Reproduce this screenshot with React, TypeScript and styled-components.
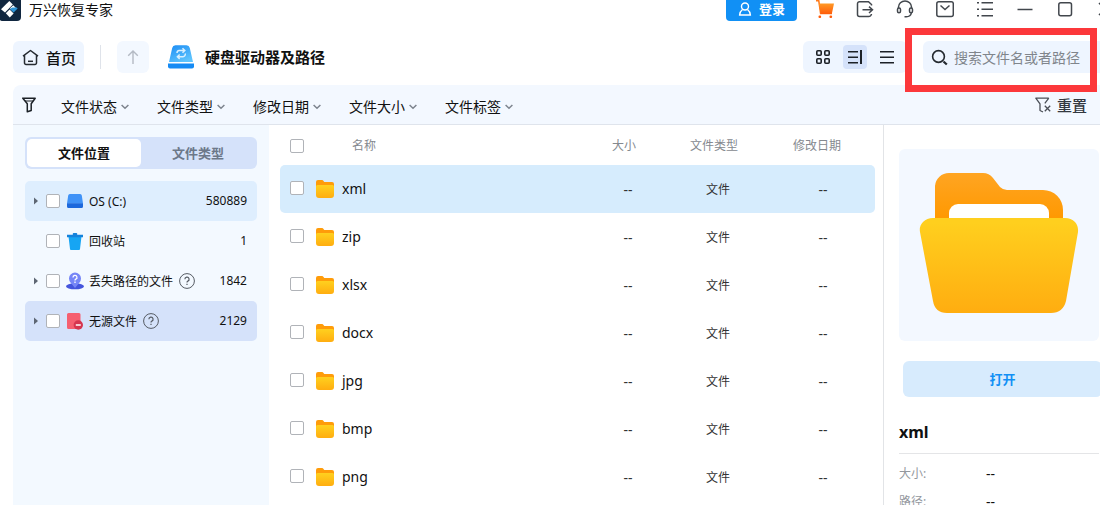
import React, { useState } from "react";
import styled, { createGlobalStyle } from "styled-components";

const GlobalStyle = createGlobalStyle`
  *, *::before, *::after { box-sizing: border-box; }
  html, body { margin: 0; padding: 0; background: #fff; overflow: hidden; }
  body, button, input {
    font-family: "Noto Sans", "Noto Sans CJK SC", sans-serif;
    color: #111;
  }
  button { border: 0; background: none; padding: 0; cursor: pointer; white-space: nowrap; }
  svg { display: block; flex: none; }
`;

const Page = styled.div`
  display: flex;
  flex-direction: column;
  height: 100vh;
  overflow: hidden;
  background: #fff;
`;

/* Title bar */

const TitleBar = styled.header`
  display: flex;
  align-items: flex-start;
  height: 21px;
`;

const AppName = styled.span`
  margin-left: 8px;
  font-size: 14px;
  line-height: 20px;
`;

const LoginButton = styled.button`
  display: flex;
  align-items: center;
  justify-content: center;
  gap: 7px;
  width: 71px;
  height: 21px;
  padding-bottom: 3px;
  margin-left: auto;
  border-radius: 0 0 4px 4px;
  background: #1190f5;
  color: #fff;
  font-size: 13px;
  font-weight: 700;
  line-height: 18px;
`;

const WindowActions = styled.nav`
  display: flex;
  margin-left: 8px;
  margin-right: -25px;
`;

const WindowButton = styled.button`
  display: flex;
  align-items: center;
  justify-content: center;
  width: 40px;
  height: 18px;
`;

/* Toolbar */

const Toolbar = styled.div`
  display: flex;
  align-items: center;
  flex: none;
  height: 32px;
  margin: 20px 0 12px;
  padding-left: 13px;
`;

const HomeButton = styled.button`
  display: flex;
  align-items: center;
  gap: 7px;
  height: 32px;
  padding: 0 8px 0 9px;
  border-radius: 6px;
  background: #eef5ff;
  font-size: 15px;
  font-weight: 500;
`;

const Divider = styled.span`
  width: 1px;
  height: 24px;
  margin: 0 16px;
  background: #dfe3ea;
`;

const UpButton = styled.button`
  display: flex;
  align-items: center;
  justify-content: center;
  width: 32px;
  height: 32px;
  border-radius: 6px;
  background: #f3f8ff;
`;

const Location = styled.h1`
  display: flex;
  align-items: center;
  gap: 11px;
  margin: 0 0 0 19px;
  font-size: 15px;
  font-weight: 700;
  line-height: 24px;
`;

const ViewSwitch = styled.div`
  display: flex;
  align-items: center;
  height: 32px;
  margin-left: auto;
  padding: 0 4px;
  border-radius: 6px;
  background: #eef5ff;
`;

const ViewButton = styled.button<{ $active?: boolean }>`
  display: flex;
  align-items: center;
  justify-content: center;
  width: 24px;
  height: 24px;
  margin: 0 4px;
  border-radius: 4px;
  background: ${(p) => (p.$active ? "#d5e2fa" : "transparent")};
`;

const SearchArea = styled.div`
  position: relative;
  width: 177px;
  margin-left: 16px;
`;

const SearchLabel = styled.label`
  display: flex;
  align-items: center;
  gap: 6px;
  height: 32px;
  padding-left: 8px;
  border-radius: 6px 0 0 6px;
  background: #eef5ff;
`;

const SearchInput = styled.input`
  flex: 1;
  min-width: 0;
  height: 32px;
  padding: 0;
  border: 0;
  outline: 0;
  background: transparent;
  font-size: 14px;
  &::placeholder { color: #80858c; opacity: 1; }
`;

const Highlight = styled.span`
  position: absolute;
  inset: -13px 3px -19px -18px;
  border: 7px solid #fc383b;
  pointer-events: none;
`;

/* Filter bar */

const FilterBar = styled.div`
  display: flex;
  align-items: center;
  flex: none;
  gap: 28px;
  height: 40px;
  margin-left: 13px;
  padding: 4px 13px 0 9px;
  border-bottom: 1px solid #dfe4ec;
  border-radius: 8px 0 0 0;
  background: #f3f8ff;
`;

const FunnelWrap = styled.span`
  display: flex;
  width: 11px;
  padding-bottom: 4px;
`;

const FilterButton = styled.button`
  display: flex;
  align-items: center;
  gap: 4px;
  font-size: 14px;
  line-height: 20px;
`;

const ResetButton = styled.button`
  display: flex;
  align-items: center;
  gap: 6px;
  margin-left: auto;
  padding-bottom: 4px;
  color: #333840;
  font-size: 15px;
  font-weight: 500;
  line-height: 20px;
`;

/* Columns */

const Columns = styled.main`
  display: grid;
  grid-template-columns: 256px minmax(0, 1fr) 217px;
  flex: 1;
  min-height: 0;
  padding-left: 13px;
`;

const Sidebar = styled.aside`
  padding: 12px;
  background: #f3f9ff;
`;

const Tabs = styled.div`
  display: flex;
  height: 32px;
  margin-bottom: 12px;
  padding: 2px;
  border-radius: 6px;
  background: #d5e2fa;
`;

const Tab = styled.button<{ $active?: boolean }>`
  flex: 1;
  border-radius: 5px;
  background: ${(p) => (p.$active ? "#fff" : "transparent")};
  color: ${(p) => (p.$active ? "#111" : "#6c7889")};
  font-size: 13px;
  font-weight: 700;
  line-height: 20px;
`;

const Tree = styled.ul`
  margin: 0;
  padding: 0;
  list-style: none;
`;

const TreeItem = styled.li<{ $tone?: string }>`
  display: flex;
  align-items: center;
  height: 40px;
  padding: 0 10px 0 9px;
  border-radius: 5px;
  background: ${(p) => p.$tone ?? "transparent"};
  font-size: 12px;
  line-height: 18px;
`;

const Expander = styled.span`
  width: 12px;
`;

const TreeLabel = styled.label`
  display: flex;
  align-items: center;
  white-space: nowrap;
`;

const TreeIcon = styled.span`
  display: flex;
  justify-content: center;
  width: 18px;
  margin: 0 5px 0 6px;
`;

const TreeName = styled.span`
  padding-top: 2px;
`;

const HelpButton = styled.button`
  margin-left: 6px;
`;

const Count = styled.span`
  margin-left: auto;
`;

const Checkbox = styled.input.attrs({ type: "checkbox" })`
  appearance: none;
  flex: none;
  display: block;
  width: 14px;
  height: 14px;
  margin: 0;
  border: 1px solid #b0b3b8;
  border-radius: 2px;
  background: #fff;
  &:checked { background: #1190f5; border-color: #1190f5; }
`;

/* File list */

const ListPane = styled.section`
  padding: 0 8px 0 11px;
  overflow: hidden;
`;

const FileTable = styled.table`
  width: 100%;
  table-layout: fixed;
  border-collapse: separate;
  border-spacing: 0;
  font-size: 12px;
  line-height: 18px;
`;

const HeadCell = styled.th<{ $width?: number; $name?: boolean }>`
  width: ${(p) => (p.$width ? `${p.$width}px` : "auto")};
  height: 40px;
  padding: ${(p) => (p.$name ? "2px 0 0 36px" : "2px 0 0")};
  color: #85898f;
  font-weight: 400;
  text-align: ${(p) => (p.$name ? "left" : "center")};
`;

const HeadCheckCell = styled.th`
  width: 36px;
  padding: 2px 0 0 10px;
`;

const CheckCell = styled.td`
  height: 48px;
  padding: 0 0 2px 10px;
`;

const NameCell = styled.td`
  padding: 0;
  font-size: 14px;
`;

const NameContent = styled.span`
  display: flex;
  align-items: center;
  gap: 8px;
`;

const InfoCell = styled.td`
  padding: 2px 0 0 8px;
  color: #333;
  text-align: center;
  &:last-child { padding-left: 12px; }
`;

const FileRow = styled.tr<{ $selected?: boolean }>`
  > td { background: ${(p) => (p.$selected ? "#d6ecfd" : "transparent")}; }
  > td:first-child { border-radius: 5px 0 0 5px; }
  > td:last-child { border-radius: 0 5px 5px 0; }
`;

const Dashes = styled.span`
  font-size: 14px;
`;

/* Details */

const Details = styled.aside`
  padding: 24px 0 0 15px;
  border-left: 1px solid #e2e4e7;
  overflow: hidden;
`;

const Preview = styled.div`
  display: flex;
  align-items: center;
  justify-content: center;
  height: 192px;
  margin-right: 1px;
  padding-bottom: 4px;
  border-radius: 6px;
  background: #f3f8ff;
`;

const OpenButton = styled.button`
  display: block;
  width: calc(100% - 2px);
  height: 36px;
  margin: 20px 0 0 4px;
  padding-bottom: 2px;
  border-radius: 6px;
  background: #d7ebfd;
  color: #1190f5;
  font-size: 13px;
  font-weight: 700;
`;

const DetailName = styled.h2`
  margin: 23px 1px 0 0;
  padding-bottom: 9px;
  border-bottom: 1px solid #e4e5e7;
  font-size: 16px;
  font-weight: 700;
  line-height: 24px;
`;

const Facts = styled.dl`
  display: grid;
  grid-template-columns: 87px 1fr;
  row-gap: 8px;
  margin: 10px 0 0;
  line-height: 20px;
  dt { color: #94989e; font-size: 12px; }
  dd { margin: 0; font-size: 14px; }
`;

/* Drawings */

const Logo = () => (
  <svg width="21" height="21" viewBox="0 0 21 21" aria-hidden="true">
    <path d="M0 0H21V17a4 4 0 0 1-4 4H2a3 3 0 0 1-2-1Z" fill="#10263f" />
    <path d="M1 9.200 9.300 1 12.800 4.400 5 12.600Z" fill="#fff" />
    <path d="M5.800 13.200 9.600 9.400 13.600 13.400 9.800 17.400Z" fill="#fff" />
    <path d="M9.800 8.600 13.200 5.200 16.300 8.200 11.500 9.600Z" fill="#fff" />
    <path d="M9.800 8.900 12.500 7.600 16.800 7.600 17.600 8.600 13.600 12.600Z" fill="#2e94d6" />
  </svg>
);

const UserIcon = () => (
  <svg width="14" height="14" viewBox="0 0 14 14" fill="none" stroke="#fff" strokeWidth="1.4">
    <circle cx="7" cy="4.500" r="3.500" />
    <path d="M4.500 7.500C2.600 9 1.600 10.800 1.600 13H12.400C12.400 10.800 11.400 9 9.500 7.500" />
  </svg>
);

const CartIcon = () => (
  <svg width="18" height="18" viewBox="0 0 18 18">
    <defs>
      <linearGradient id="cart" x1="0" y1="0" x2="0" y2="1">
        <stop offset="0" stopColor="#ff9a26" />
        <stop offset="1" stopColor="#ff5c0a" />
      </linearGradient>
    </defs>
    <path d="M0 .8H2.800L4.600 13.500H16" fill="none" stroke="#ff7a1a" strokeWidth="1.500" />
    <path d="M2.800 3.500H18L15.800 14H4.600Z" fill="url(#cart)" />
    <rect x="2.500" y="15.500" width="2.600" height="2.500" rx="1" fill="#ff5c0a" />
    <rect x="13.500" y="15.500" width="2.600" height="2.500" rx="1" fill="#ff5c0a" />
  </svg>
);

const outline = { fill: "none", stroke: "#42474d", strokeWidth: 1.5 } as const;

const ExportIcon = () => (
  <svg width="18" height="18" viewBox="0 0 18 18" {...outline}>
    <path d="M15.500 5.500V4.500L12.500 1.700H3.500a2 2 0 0 0-2 2V14.500a2 2 0 0 0 2 2H12.500a3 3 0 0 0 3-2.500" />
    <path d="M6.500 9.800H16.500M13 6.600 16.500 9.800 13 13" />
  </svg>
);

const HeadsetIcon = () => (
  <svg width="18" height="18" viewBox="0 0 18 18" {...outline}>
    <path d="M2.500 8V7a6.500 6 0 0 1 13 0v1" />
    <rect x="1.500" y="8" width="3" height="4.800" rx="1.500" />
    <rect x="13.500" y="8" width="3" height="4.800" rx="1.500" />
    <path d="M15.300 13c-.4 2.500-2 3.700-5 3.800H8.500" />
  </svg>
);

const MailIcon = () => (
  <svg width="18" height="18" viewBox="0 0 18 18" {...outline}>
    <rect x=".8" y="1.800" width="16.500" height="14.700" rx="2" />
    <path d="M4.500 5.500 9 9.500 13.500 5.500" />
  </svg>
);

const MenuIcon = () => (
  <svg width="16" height="16" viewBox="0 0 16 16" {...outline}>
    <path d="M0 1.800H2M4.500 1.800H16M0 8.300H2M4.500 8.300H16M0 14.800H2M4.500 14.800H16" />
  </svg>
);

const MinimizeIcon = () => (
  <svg width="16" height="16" viewBox="0 0 16 16" {...outline}>
    <path d="M0.500 8.500H15.500" />
  </svg>
);

const MaximizeIcon = () => (
  <svg width="16" height="16" viewBox="0 0 16 16" {...outline}>
    <rect x="1.800" y="1.800" width="12.700" height="13" rx="2" />
  </svg>
);

const CloseIcon = () => (
  <svg width="16" height="16" viewBox="0 0 16 16" {...outline}>
    <path d="M2 2 14 14M14 2 2 14" />
  </svg>
);

const HomeIcon = () => (
  <svg width="17" height="17" viewBox="0 0 17 17" fill="none" stroke="#262b31" strokeWidth="1.500" strokeLinejoin="round">
    <path d="M1 7.200 8.500 1.500 16 7.200M2.500 6.500V14A1.500 1.500 0 0 0 4 15.500H13A1.500 1.500 0 0 0 14.500 14V6.500" />
    <path d="M6 12.300H11" />
  </svg>
);

const UpIcon = () => (
  <svg width="12" height="14" viewBox="0 0 12 14" fill="none" stroke="#b4bac4" strokeWidth="1.400">
    <path d="M6 14V1M1.200 5.800 6 1 10.800 5.800" />
  </svg>
);

const DriveIcon = () => (
  <svg width="26" height="26" viewBox="0 0 26 26">
    <defs>
      <linearGradient id="drive" x1="0" y1="0" x2="0.600" y2="1">
        <stop offset="0" stopColor="#1a8cf5" />
        <stop offset="1" stopColor="#5fc4fd" />
      </linearGradient>
    </defs>
    <path d="M4.200 4A3.500 3.500 0 0 1 7.500 1.200H18.500A3.500 3.500 0 0 1 21.800 4L25 18H1Z" fill="url(#drive)" />
    <path d="M0 19.500H26V22.500a2 2 0 0 1-2 2H2a2 2 0 0 1-2-2Z" fill="#168bf4" />
    <path d="M9 9A2.500 2.500 0 0 1 11.200 6.500H16.500M14.500 4.300 16.800 6.500 14.500 8.700M17.200 9.500A2.500 2.500 0 0 1 15 12.700H10M11.700 10.500 9.400 12.700 11.700 14.900" fill="none" stroke="#d8effe" strokeWidth="1.500" />
  </svg>
);

const GridIcon = () => (
  <svg width="16" height="16" viewBox="0 0 16 16" fill="none" stroke="#1c2127" strokeWidth="1.600">
    <rect x="1.800" y="1.800" width="4.400" height="4.400" rx="1" />
    <rect x="9.800" y="1.800" width="4.400" height="4.400" rx="1" />
    <rect x="1.800" y="9.800" width="4.400" height="4.400" rx="1" />
    <rect x="9.800" y="9.800" width="4.400" height="4.400" rx="1" />
  </svg>
);

const DetailIcon = () => (
  <svg width="16" height="16" viewBox="0 0 16 16" fill="none" stroke="#1c2127" strokeWidth="1.600">
    <path d="M1 2.700H11M1 8.300H11M1 13.700H11" />
    <path d="M14 1V15" strokeWidth="2" />
  </svg>
);

const ListIcon = () => (
  <svg width="16" height="16" viewBox="0 0 16 16" fill="none" stroke="#1c2127" strokeWidth="1.600">
    <path d="M1 2.700H15M1 8.300H15M1 13.700H15" />
  </svg>
);

const SearchIcon = () => (
  <svg width="17" height="17" viewBox="0 0 17 17" fill="none" stroke="#24292f" strokeWidth="1.600">
    <circle cx="7.500" cy="7.500" r="5.900" />
    <path d="M12.500 12.500 15.800 15.500" strokeWidth="2.200" />
  </svg>
);

const FunnelIcon = () => (
  <svg width="14" height="16" viewBox="0 0 14 16" fill="none" stroke="#1c2127" strokeWidth="1.500" strokeLinejoin="round">
    <path d="M.8 1.200H13.200L9.200 6.800V13.500L5.300 14.800V6.800Z" />
    <path d="M3 4H11" strokeWidth="1" />
  </svg>
);

const ResetIcon = () => (
  <svg width="16" height="16" viewBox="0 0 16 16" fill="none" stroke="#4a4f57" strokeWidth="1.300" strokeLinejoin="round">
    <path d="M13.800 1.200H.8L5 6.800V13.500L8 15M13.800 1.200 9.800 6.300" />
    <path d="M9.800 8.800 15.200 14.300M15.200 8.800 9.800 14.300" />
  </svg>
);

const ChevronIcon = () => (
  <svg width="8" height="6" viewBox="0 0 8 6" fill="none" stroke="#7d848e" strokeWidth="1.500">
    <path d="M.6 1 4 4.300 7.400 1" />
  </svg>
);

const ArrowIcon = () => (
  <svg width="4" height="8" viewBox="0 0 4 8">
    <path d="M0 .5 4 4 0 7.500Z" fill="#5d6673" />
  </svg>
);

const DiskIcon = () => (
  <svg width="16" height="14" viewBox="0 0 16 14">
    <path d="M1.200 1.500A1.700 1.700 0 0 1 2.900 0H13.100A1.700 1.700 0 0 1 14.800 1.500L16 9.500H0Z" fill="#3f92f7" />
    <path d="M0 9.200H16V12.500A1.500 1.500 0 0 1 14.500 14H1.500A1.500 1.500 0 0 1 0 12.500Z" fill="#1c68dc" />
  </svg>
);

const TrashIcon = () => (
  <svg width="16" height="17" viewBox="0 0 16 17">
    <path d="M1.500 3.500H14.500L13 16a1 1 0 0 1-1 1H4a1 1 0 0 1-1-1Z" fill="#16a5f3" />
    <path d="M0 1.800H5.800V.8A.8.8 0 0 1 6.600 0H9.400a.8.8 0 0 1 .8.8V1.800H16V4.200H0Z" fill="#1583dc" />
  </svg>
);

const LostIcon = () => (
  <svg width="18" height="18" viewBox="0 0 18 18">
    <ellipse cx="9" cy="14.300" rx="9" ry="3" fill="#4455dd" />
    <path d="M9 16 4.500 10.500A6 6 0 1 1 13.500 10.500Z" fill="#7686f7" />
    <path d="M7 5.400A2 2 0 1 1 9.800 7.200Q9 7.600 9 8.500M9 9.600V11" fill="none" stroke="#fff" strokeWidth="1.300" />
  </svg>
);

const OrphanIcon = () => (
  <svg width="16" height="18" viewBox="0 0 16 18">
    <path d="M0 2.500A1.500 1.500 0 0 1 1.500 1H12a1.500 1.500 0 0 1 1.500 1.500V17H1.500A1.500 1.500 0 0 1 0 15.500Z" fill="#f55f70" />
    <circle cx="11.300" cy="13" r="4.700" fill="#d5354f" />
    <path d="M8.800 13H13.800" stroke="#fff" strokeWidth="1.500" />
  </svg>
);

const HelpIcon = () => (
  <svg width="16" height="16" viewBox="0 0 16 16" fill="none" stroke="#555b63">
    <circle cx="8" cy="8" r="7.400" />
    <path d="M5.900 6.300A2.100 2.100 0 1 1 8.900 8.100Q8 8.600 8 9.600M8 10.800V12" strokeWidth="1.200" />
  </svg>
);

const FolderIcon = () => (
  <svg width="18" height="18" viewBox="0 0 18 18">
    <path d="M0 2A2 2 0 0 1 2 0H6a1.800 1.800 0 0 1 1.500.9L8.300 2H16a2 2 0 0 1 2 2V9H0Z" fill="#ff9c0a" />
    <path d="M0 6.500A1.500 1.500 0 0 1 1.500 5H16.500A1.500 1.500 0 0 1 18 6.500V15a3 3 0 0 1-3 3H3a3 3 0 0 1-3-3Z" fill="url(#front)" />
  </svg>
);

const OpenFolderIcon = () => (
  <svg width="160" height="142" viewBox="0 0 160 142">
    <defs>
      <linearGradient id="front" x1="0" y1="0" x2="0" y2="1">
        <stop offset="0.050" stopColor="#ffcf1e" />
        <stop offset="1" stopColor="#ffad10" />
      </linearGradient>
      <linearGradient id="back" x1="0" y1="0" x2="0" y2="1">
        <stop offset="0" stopColor="#ffa522" />
        <stop offset="0.800" stopColor="#ff9800" />
      </linearGradient>
    </defs>
    <path d="M16 60V14A14 14 0 0 1 30 1H64Q70 1 74 6L81 15Q84 18 88 18H124A20 20 0 0 1 144 38V60Z" fill="url(#back)" />
    <path d="M30 50V41A9 9 0 0 1 39 32H121A9 9 0 0 1 130 41V50Z" fill="#fff" />
    <path d="M14 46H146Q152 46 156 50Q159.500 54 159 60L147 129Q144 141 132 141H28Q16 141 14 129L1 60Q0 54 4 50Q8 46 14 46Z" fill="url(#front)" />
  </svg>
);

const filters = ["文件状态", "文件类型", "修改日期", "文件大小", "文件标签"];

const locations = [
  { name: "OS (C:)", count: "580889", Icon: DiskIcon, expandable: true, help: false, tone: "#deeefe" },
  { name: "回收站", count: "1", Icon: TrashIcon, expandable: false, help: false },
  { name: "丢失路径的文件", count: "1842", Icon: LostIcon, expandable: true, help: true },
  { name: "无源文件", count: "2129", Icon: OrphanIcon, expandable: true, help: true, tone: "#d5e2fa" },
];

const files = ["xml", "zip", "xlsx", "docx", "jpg", "bmp", "png"];

const windowActions = [
  { label: "购物车", Icon: CartIcon },
  { label: "导出", Icon: ExportIcon },
  { label: "客服", Icon: HeadsetIcon },
  { label: "邮件", Icon: MailIcon },
  { label: "菜单", Icon: MenuIcon },
  { label: "最小化", Icon: MinimizeIcon },
  { label: "最大化", Icon: MaximizeIcon },
  { label: "关闭", Icon: CloseIcon },
];

export default function App() {
  const [selected, setSelected] = useState("xml");

  return (
    <Page>
      <GlobalStyle />
      <TitleBar>
        <Logo />
        <AppName>万兴恢复专家</AppName>
        <LoginButton>
          <UserIcon />
          登录
        </LoginButton>
        <WindowActions>
          {windowActions.map(({ label, Icon }) => (
            <WindowButton key={label} aria-label={label}>
              <Icon />
            </WindowButton>
          ))}
        </WindowActions>
      </TitleBar>

      <Toolbar>
        <HomeButton>
          <HomeIcon />
          首页
        </HomeButton>
        <Divider />
        <UpButton aria-label="上一级">
          <UpIcon />
        </UpButton>
        <Location>
          <DriveIcon />
          硬盘驱动器及路径
        </Location>
        <ViewSwitch>
          <ViewButton aria-label="图标视图"><GridIcon /></ViewButton>
          <ViewButton aria-label="详情视图" $active><DetailIcon /></ViewButton>
          <ViewButton aria-label="列表视图"><ListIcon /></ViewButton>
        </ViewSwitch>
        <SearchArea>
          <SearchLabel>
            <SearchIcon />
            <SearchInput type="text" placeholder="搜索文件名或者路径" aria-label="搜索" />
          </SearchLabel>
          <Highlight />
        </SearchArea>
      </Toolbar>

      <FilterBar>
        <FunnelWrap><FunnelIcon /></FunnelWrap>
        {filters.map((name) => (
          <FilterButton key={name}>
            {name}
            <ChevronIcon />
          </FilterButton>
        ))}
        <ResetButton>
          <ResetIcon />
          重置
        </ResetButton>
      </FilterBar>

      <Columns>
        <Sidebar>
          <Tabs role="tablist">
            <Tab role="tab" aria-selected="true" $active>文件位置</Tab>
            <Tab role="tab" aria-selected="false">文件类型</Tab>
          </Tabs>
          <Tree>
            {locations.map(({ name, count, Icon, expandable, help, tone }) => (
              <TreeItem key={name} $tone={tone}>
                <Expander>{expandable && <ArrowIcon />}</Expander>
                <TreeLabel>
                  <Checkbox />
                  <TreeIcon><Icon /></TreeIcon>
                  <TreeName>{name}</TreeName>
                </TreeLabel>
                {help && <HelpButton aria-label="帮助"><HelpIcon /></HelpButton>}
                <Count>{count}</Count>
              </TreeItem>
            ))}
          </Tree>
        </Sidebar>

        <ListPane>
          <FileTable>
            <thead>
              <tr>
                <HeadCheckCell><Checkbox aria-label="全选" /></HeadCheckCell>
                <HeadCell $name>名称</HeadCell>
                <HeadCell $width={90}>大小</HeadCell>
                <HeadCell $width={90}>文件类型</HeadCell>
                <HeadCell $width={116}>修改日期</HeadCell>
              </tr>
            </thead>
            <tbody>
              {files.map((name) => (
                <FileRow key={name} $selected={name === selected} onClick={() => setSelected(name)}>
                  <CheckCell><Checkbox aria-label={name} /></CheckCell>
                  <NameCell>
                    <NameContent>
                      <FolderIcon />
                      {name}
                    </NameContent>
                  </NameCell>
                  <InfoCell><Dashes>--</Dashes></InfoCell>
                  <InfoCell>文件</InfoCell>
                  <InfoCell><Dashes>--</Dashes></InfoCell>
                </FileRow>
              ))}
            </tbody>
          </FileTable>
        </ListPane>

        <Details>
          <Preview><OpenFolderIcon /></Preview>
          <OpenButton>打开</OpenButton>
          <DetailName>{selected}</DetailName>
          <Facts>
            <dt>大小:</dt>
            <dd>--</dd>
            <dt>路径:</dt>
            <dd>--</dd>
          </Facts>
        </Details>
      </Columns>
    </Page>
  );
}
